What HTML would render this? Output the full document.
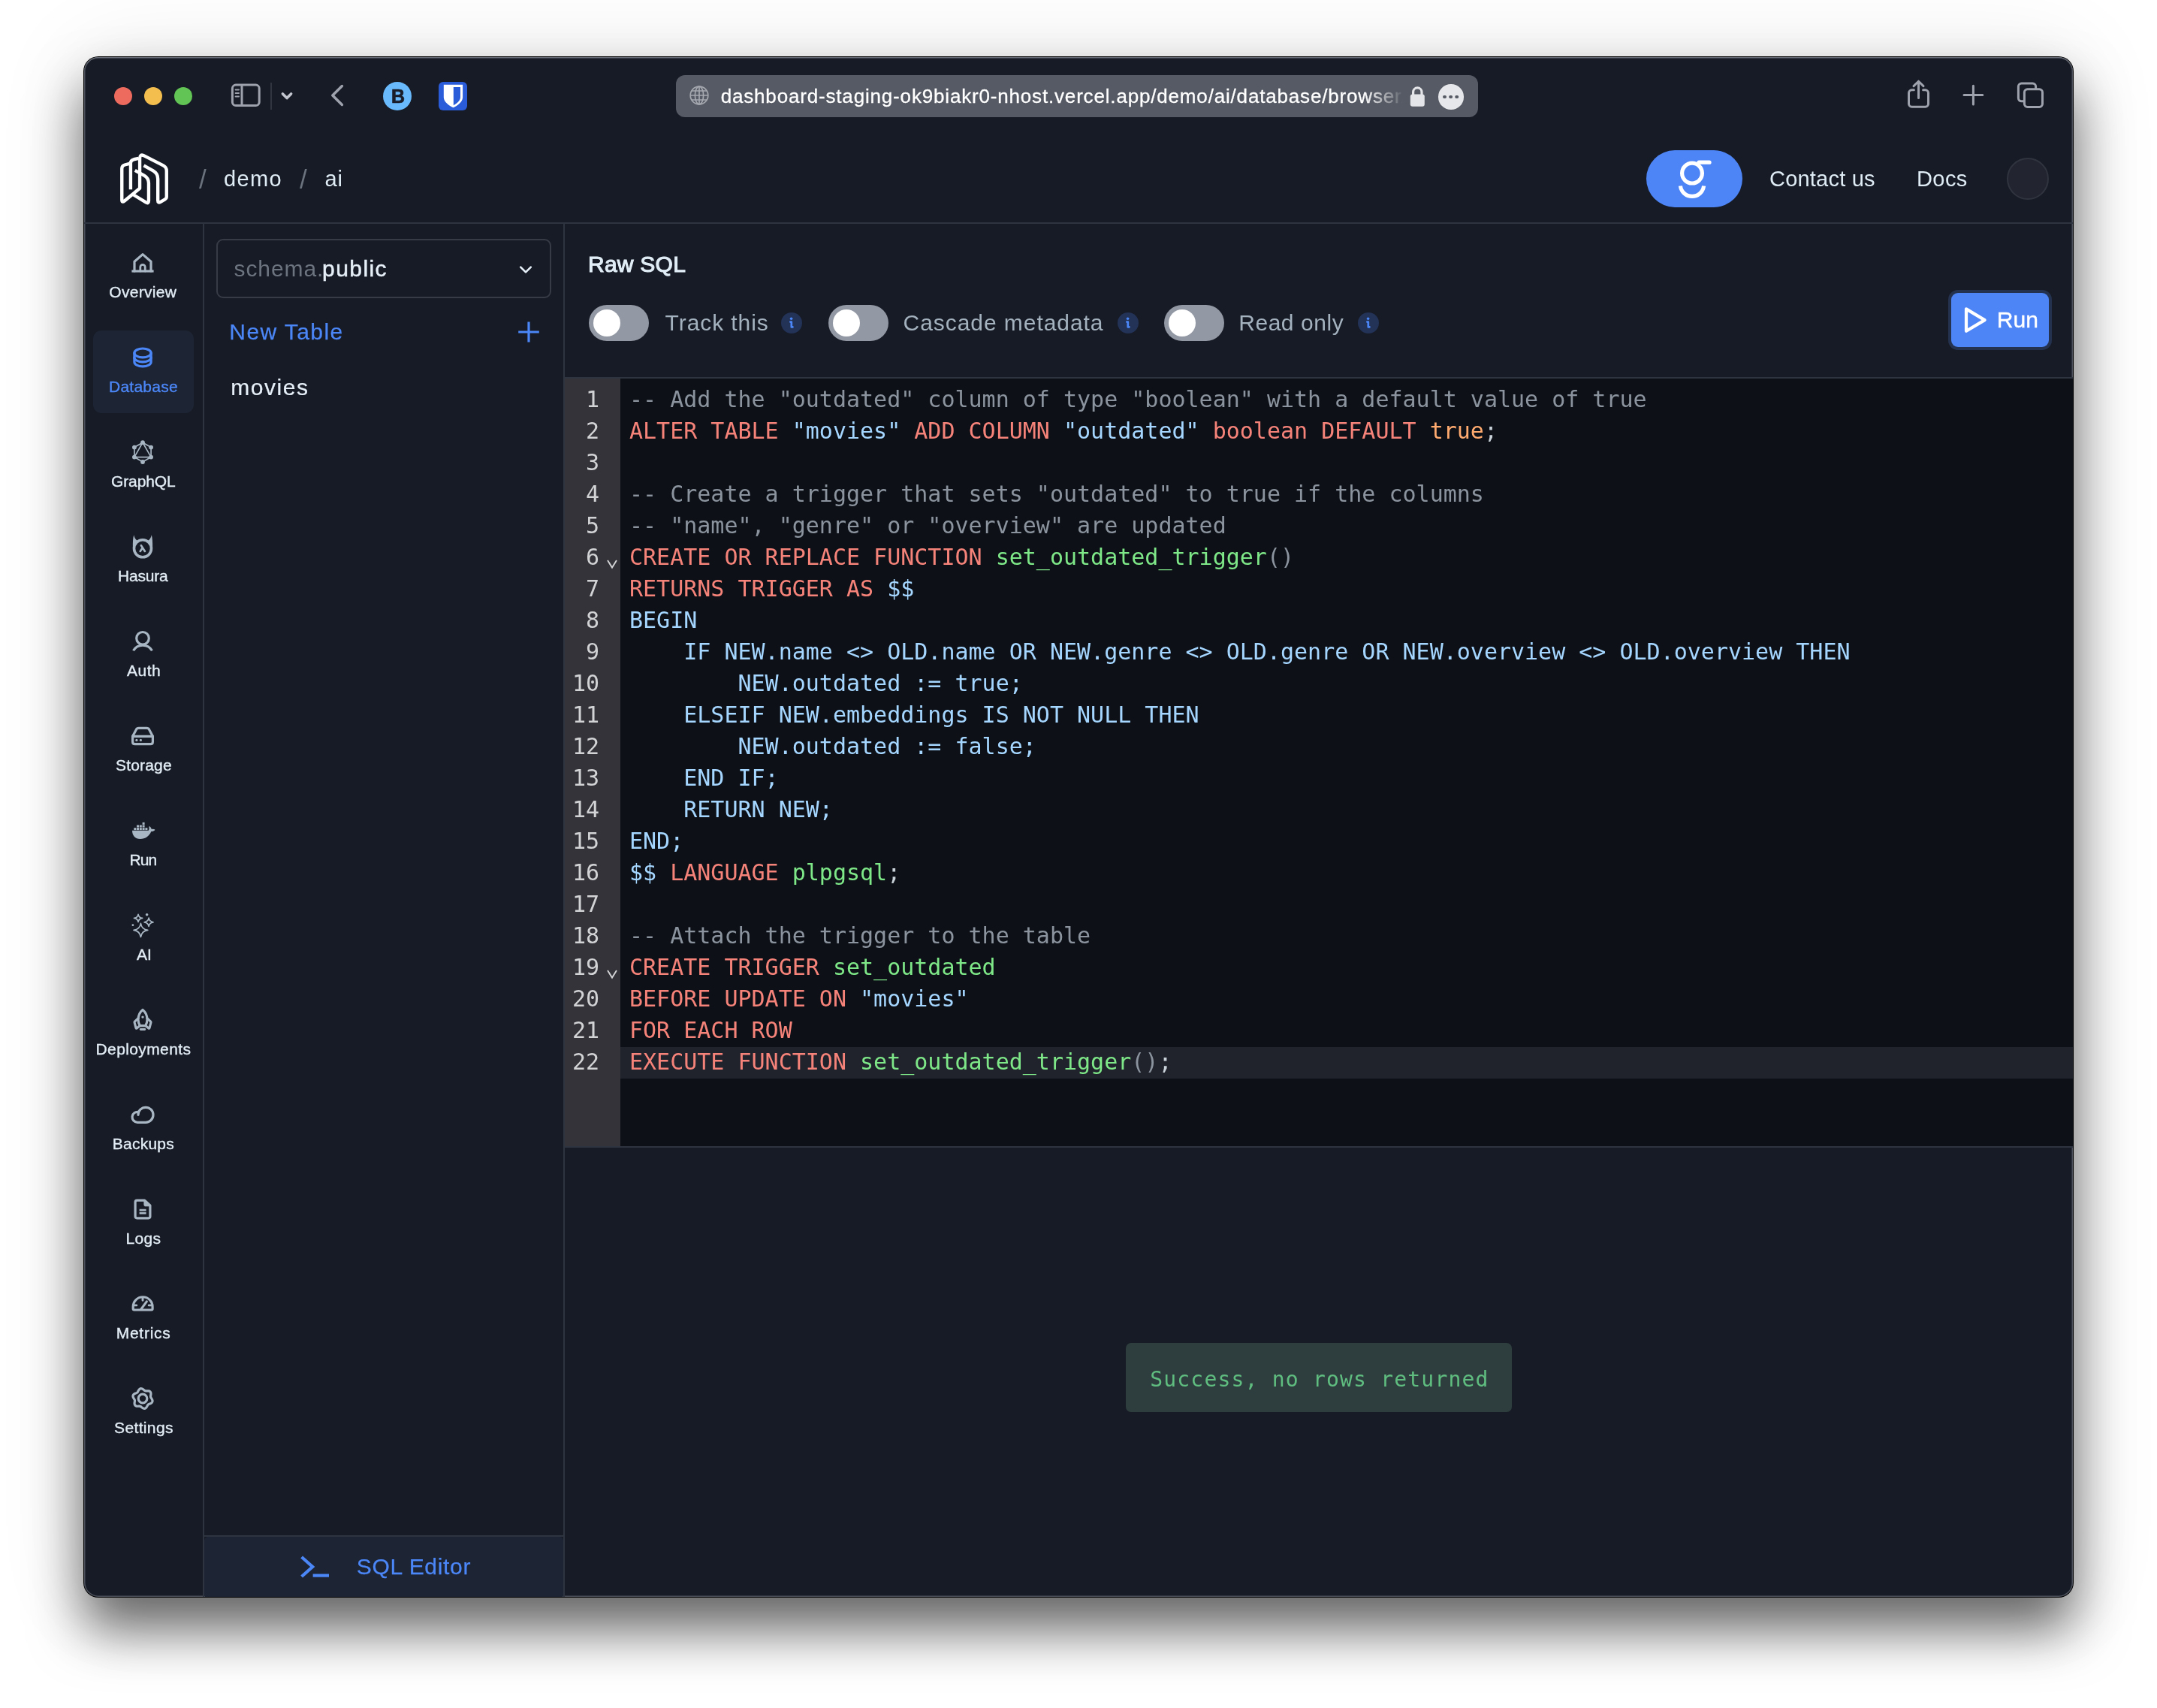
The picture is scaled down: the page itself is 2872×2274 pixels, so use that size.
<!DOCTYPE html>
<html lang="en"><head><meta charset="utf-8"><title>Nhost Dashboard - SQL Editor</title>
<style>

*{box-sizing:border-box;margin:0;padding:0}
html,body{width:2872px;height:2274px;overflow:hidden;background:#fff}
body{position:relative;font-family:"Liberation Sans",sans-serif;-webkit-font-smoothing:antialiased}
.win-outer{position:absolute;left:111px;top:75px;width:2650px;height:2052px;border-radius:20px;background:#000;
 box-shadow:0 43px 70px rgba(0,0,0,.58),0 0 120px rgba(0,0,0,.10)}
.win{position:absolute;left:112px;top:76px;width:2648px;height:2050px;border-radius:19px;background:#171b25;overflow:hidden;
 box-shadow:inset 0 1.3px 0 0 #696d77,inset 0 0 0 1.5px #4b505a}
.page{position:absolute;left:-112px;top:-76px;width:2872px;height:2274px;will-change:transform}
.abs{position:absolute}
.dc{display:contents}
.t{position:absolute;line-height:0;white-space:nowrap}
svg{position:absolute;overflow:visible}
.hl{position:absolute;background:#2e3440}

.editor{background:#0d1017;overflow:hidden;font-family:"DejaVu Sans Mono","Liberation Mono",monospace;font-size:30px;line-height:40px}
.gutter{position:absolute;left:0;top:0;width:74px;height:100%;background:#343339;padding-top:8px;color:#d2d3d5}
.gn{position:relative;height:42px;width:46px;text-align:right;white-space:nowrap}
.fold{position:absolute;left:56px;top:22.6px}
.code{position:absolute;left:74px;top:0;right:0;height:100%;padding-top:8px}
.ln{height:42px;padding-left:12px;white-space:pre}
.ln.act{background:#20222c}

</style></head>
<body>
<div class="win-outer"></div>
<div class="win"><div class="page">
<div class="dc" role="toolbar" aria-label="Safari toolbar">
<!-- ===== Safari title bar ===== -->
<div class="abs" style="left:152px;top:116px;width:24px;height:24px;border-radius:50%;background:#ec6a5e"></div>
<div class="abs" style="left:192px;top:116px;width:24px;height:24px;border-radius:50%;background:#f4be4f"></div>
<div class="abs" style="left:232px;top:116px;width:24px;height:24px;border-radius:50%;background:#61c454"></div>
<svg style="left:300px;top:100px" width="180" height="56" viewBox="300 100 180 56" fill="none" stroke="#9ea2ac" stroke-linecap="round" stroke-linejoin="round">
  <rect x="309.4" y="113.1" width="35.8" height="27.5" rx="4.6" stroke-width="3"/>
  <path d="M322 113.5V140.2" stroke-width="3"/>
  <path d="M313.6 119.6H318M313.6 124H318M313.6 128.5H318" stroke-width="2"/>
  <path d="M361 110V146" stroke="#31353f" stroke-width="2" stroke-linecap="butt"/>
  <path d="M376.4 124.9L382 130.6L387.6 124.9" stroke="#c3c6ce" stroke-width="3.6"/>
  <path d="M455.4 114.6L442.8 127L455.4 139.4" stroke-width="3.5"/>
</svg>
<!-- extension icons -->
<div class="abs" style="left:509.8px;top:108.7px;width:38.6px;height:38.6px;border-radius:50%;background:#69bafd"></div>
<span class="t " style="left:521.00px;top:128.10px;font-size:25px;color:#191e2a;font-weight:700;-webkit-text-stroke:0.7px #191e2a;">B</span>
<div class="abs" style="left:584px;top:109px;width:38px;height:38px;border-radius:6px;background:#2a5bd8"></div>
<svg style="left:584px;top:109px" width="38" height="38" viewBox="0 0 38 38">
  <path d="M6.8 3.7H32.1V20.5C32.1 27 25 31.5 19.5 34.3C14 31.5 6.8 27 6.8 20.5Z" fill="#fff"/>
  <path d="M19.8 7H29V20.5C29 25 24 28.8 19.8 31.2Z" fill="#2a5bd8"/>
</svg>
<!-- url bar -->
<div class="abs" style="left:900px;top:100px;width:1068px;height:56px;border-radius:12px;background:#565a64"></div>
<svg style="left:918px;top:114px" width="26" height="26" viewBox="0 0 26 26" fill="none" stroke="#a5a8af" stroke-width="1.7">
  <circle cx="13" cy="13" r="11.8"/>
  <ellipse cx="13" cy="13" rx="5.6" ry="11.8"/>
  <path d="M13 1.2V24.8M1.2 13H24.8M2.9 7H23.1M2.9 19H23.1"/>
</svg>
<div class="abs" style="left:950px;top:100px;width:918px;height:56px;overflow:hidden;-webkit-mask-image:linear-gradient(90deg,#000 0,#000 866px,rgba(0,0,0,.25) 908px,transparent 918px);mask-image:linear-gradient(90deg,#000 0,#000 866px,rgba(0,0,0,.25) 908px,transparent 918px)">
<span class="t " style="left:9.70px;top:28.00px;font-size:26px;color:#ffffff;letter-spacing:0.826px;-webkit-text-stroke:0.3px;">dashboard-staging-ok9biakr0-nhost.vercel.app/demo/ai/database/browser/</span>
</div>
<svg style="left:1876px;top:114px" width="24" height="30" viewBox="1876 114 24 30">
  <path d="M1881.6 127V122.6A5.7 5.7 0 0 1 1893 122.6V127" fill="none" stroke="#e4e5e8" stroke-width="3.2"/>
  <rect x="1877.8" y="125.6" width="19" height="16.2" rx="3" fill="#e4e5e8"/>
</svg>
<div class="abs" style="left:1915px;top:112px;width:33.5px;height:33.5px;border-radius:50%;background:#e6e7ea"></div>
<div class="abs" style="left:1921.4px;top:126.8px;width:4.4px;height:4.4px;border-radius:50%;background:#565a64;box-shadow:8.1px 0 0 #565a64,16.2px 0 0 #565a64"></div>
<!-- right toolbar -->
<svg style="left:2530px;top:100px" width="200" height="56" viewBox="2530 100 200 56" fill="none" stroke="#9ea2ac" stroke-width="3" stroke-linecap="round" stroke-linejoin="round">
  <path d="M2548.4 119.8H2545.5A4 4 0 0 0 2541.5 123.8V138.2A4 4 0 0 0 2545.5 142.2H2563.5A4 4 0 0 0 2567.5 138.2V123.8A4 4 0 0 0 2563.5 119.8H2560.6"/>
  <path d="M2554.5 130.5V108.6M2548 114.6L2554.5 108.2L2561 114.6"/>
  <path d="M2615 126.6H2639.8M2627.4 114.2V139"/>
  <path d="M2694.5 134.8H2691.6A4.2 4.2 0 0 1 2687.4 130.6V115.3A4.2 4.2 0 0 1 2691.6 111.1H2706.4A4.2 4.2 0 0 1 2710.6 115.3V118.2"/>
  <rect x="2695.4" y="118.8" width="24.1" height="23.7" rx="4.2"/>
</svg>
</div>
<header class="dc">
<!-- ===== App header ===== -->
<svg style="left:140px;top:190px" width="200" height="100" viewBox="0 0 2157 1078.5" fill="none" stroke="#fff" stroke-width="47" stroke-linejoin="round" stroke-linecap="butt">
  <path d="M350 300L282 318Q240 330 240 372V820Q240 866 278 836L497 655V225Q497 160 555 185L835 328Q882 352 882 405V775Q882 800 860 812L795 850Q757 872 757 830V520Q757 440 690 402L555 327"/>
  <path d="M428 397L560 470Q625 508 625 580V835Q625 882 585 857L405 747"/>
  <path d="M366 672V292Q366 250 410 240L480 226"/>
</svg>
<span class="t " style="left:264.90px;top:239.20px;font-size:35px;color:#6b737e;">/</span>
<span class="t " style="left:298.00px;top:238.00px;font-size:29px;color:#dfecf5;letter-spacing:1.361px;">demo</span>
<span class="t " style="left:399.00px;top:239.20px;font-size:35px;color:#6b737e;">/</span>
<span class="t " style="left:432.60px;top:238.00px;font-size:29px;color:#dfecf5;letter-spacing:0.865px;">ai</span>
<div class="abs" style="left:2192px;top:200px;width:128px;height:76px;border-radius:38px;background:#4d85f6"></div>
<svg style="left:2230px;top:208.9px" width="56" height="60" viewBox="2230 208 56 60" fill="none" stroke="#fff" stroke-width="5.2" stroke-linecap="round">
  <circle cx="2253" cy="229.6" r="13.4"/>
  <path d="M2262 215.2H2276"/>
  <path d="M2237.4 246.5A15.7 15.7 0 0 0 2268.6 246.5" stroke-linecap="butt"/>
</svg>
<span class="t " style="left:2356.00px;top:238.00px;font-size:29px;color:#dfecf5;letter-spacing:0.207px;">Contact us</span>
<span class="t " style="left:2552.00px;top:238.00px;font-size:29px;color:#dfecf5;letter-spacing:0.407px;">Docs</span>
<div class="abs" style="left:2672px;top:210px;width:56px;height:56px;border-radius:50%;background:#22252f;border:2px solid #30343e"></div>
<div class="hl" style="left:111px;top:296px;width:2650px;height:2px"></div>
</header>
<nav class="dc" aria-label="Project navigation"><!-- ===== Sidebar ===== -->
<div class="hl" style="left:270px;top:298px;width:2px;height:1830px"></div>
<div class="abs" style="left:124px;top:440px;width:134px;height:110px;border-radius:11px;background:#1d2433"></div>
<span class="t " style="left:145.30px;top:388.50px;font-size:21px;color:#e3edf5;letter-spacing:0.291px;-webkit-text-stroke:0.35px;">Overview</span>
<span class="t " style="left:145.05px;top:514.50px;font-size:21px;color:#4c87f8;letter-spacing:0.239px;-webkit-text-stroke:0.35px;">Database</span>
<span class="t " style="left:148.00px;top:640.50px;font-size:21px;color:#e3edf5;letter-spacing:-0.119px;-webkit-text-stroke:0.35px;">GraphQL</span>
<span class="t " style="left:157.05px;top:766.50px;font-size:21px;color:#e3edf5;letter-spacing:-0.225px;-webkit-text-stroke:0.35px;">Hasura</span>
<span class="t " style="left:169.05px;top:892.50px;font-size:21px;color:#e3edf5;letter-spacing:0.459px;-webkit-text-stroke:0.35px;">Auth</span>
<span class="t " style="left:154.10px;top:1018.50px;font-size:21px;color:#e3edf5;letter-spacing:0.153px;-webkit-text-stroke:0.35px;">Storage</span>
<span class="t " style="left:172.45px;top:1144.50px;font-size:21px;color:#e3edf5;letter-spacing:-0.876px;-webkit-text-stroke:0.35px;">Run</span>
<span class="t " style="left:182.05px;top:1270.50px;font-size:21px;color:#e3edf5;letter-spacing:-0.109px;-webkit-text-stroke:0.35px;">AI</span>
<span class="t " style="left:127.50px;top:1396.50px;font-size:21px;color:#e3edf5;letter-spacing:0.394px;-webkit-text-stroke:0.35px;">Deployments</span>
<span class="t " style="left:149.75px;top:1522.50px;font-size:21px;color:#e3edf5;letter-spacing:0.242px;-webkit-text-stroke:0.35px;">Backups</span>
<span class="t " style="left:167.60px;top:1648.50px;font-size:21px;color:#e3edf5;letter-spacing:0.251px;-webkit-text-stroke:0.35px;">Logs</span>
<span class="t " style="left:154.75px;top:1774.50px;font-size:21px;color:#e3edf5;letter-spacing:0.721px;-webkit-text-stroke:0.35px;">Metrics</span>
<span class="t " style="left:152.05px;top:1900.50px;font-size:21px;color:#e3edf5;letter-spacing:0.358px;-webkit-text-stroke:0.35px;">Settings</span>
<svg style="left:111px;top:298px" width="160" height="1830" viewBox="111 298 160 1830"><g fill="none" stroke="#a8b6c3" stroke-width="3.2" stroke-linecap="round" stroke-linejoin="round" stroke-width="3"><path d="M175.4 361H204.6" stroke-linecap="butt"/><path d="M179 361V348.2L190 338.6L201 348.2V361"/><path d="M186.8 361V355.6A3.2 3.2 0 0 1 193.2 355.6V361" stroke-width="2.8"/></g><g fill="none" stroke="#4c87f8" stroke-width="3.2" stroke-linecap="round" stroke-linejoin="round" stroke-width="3.3"><ellipse cx="190" cy="469.9" rx="11.1" ry="5.9"/><path d="M178.9 469.9V481.9C178.9 485.2 183.9 487.8 190 487.8S201.1 485.2 201.1 481.9V469.9"/><path d="M178.9 475.9C178.9 479.2 183.9 481.8 190 481.8S201.1 479.2 201.1 475.9"/></g><path d="M190 589.2L178.9 595.6 M190 589.2L201.1 595.6 M178.9 595.6L178.9 608.6 M201.1 595.6L201.1 608.6 M178.9 608.6L190 615 M201.1 608.6L190 615 M190 589.2L178.9 608.6 M190 589.2L201.1 608.6 M178.9 608.6L201.1 608.6" fill="none" stroke="#a8b6c3" stroke-width="1.7"/><circle cx="190" cy="589.2" r="2.9" fill="#a8b6c3"/><circle cx="178.9" cy="595.6" r="2.9" fill="#a8b6c3"/><circle cx="201.1" cy="595.6" r="2.9" fill="#a8b6c3"/><circle cx="178.9" cy="608.6" r="2.9" fill="#a8b6c3"/><circle cx="201.1" cy="608.6" r="2.9" fill="#a8b6c3"/><circle cx="190" cy="615" r="2.9" fill="#a8b6c3"/><circle cx="190" cy="730.3" r="11.5" fill="none" stroke="#a8b6c3" stroke-width="3.6"/><path d="M178.2 712.3C177.1 716.2 176.7 722.3 176.9 729L183.4 720.2C180.6 718.6 178.9 715.8 178.2 712.3Z" fill="#a8b6c3"/><path d="M201.8 712.3C202.9 716.2 203.3 722.3 203.1 729L196.6 720.2C199.4 718.6 201.1 715.8 201.8 712.3Z" fill="#a8b6c3"/><path d="M187.9 726.2L192.9 733.9M189.7 729.4L186.7 733.9" fill="none" stroke="#a8b6c3" stroke-width="2.7" stroke-linecap="round"/><g fill="none" stroke="#a8b6c3" stroke-width="3.2" stroke-linecap="round" stroke-linejoin="round" stroke-width="3.3"><circle cx="190" cy="849.8" r="8.3"/><path d="M177.5 866.3A14.4 14.4 0 0 1 202.5 866.3" stroke-linecap="butt"/></g><g fill="none" stroke="#a8b6c3" stroke-width="3.2" stroke-linecap="round" stroke-linejoin="round"><path d="M184.6 969.4H195.4Q197.7 969.4 198.7 971.4L203.4 980.3V987.7Q203.4 990.7 200.4 990.7H179.6Q176.6 990.7 176.6 987.7V980.3L181.3 971.4Q182.3 969.4 184.6 969.4Z"/><path d="M176.6 980.3H203.4"/></g><circle cx="181.9" cy="985.4" r="1.6" fill="#a8b6c3"/><circle cx="187.4" cy="985.4" r="1.6" fill="#a8b6c3"/><path d="M176 1105.8H197.6C198.6 1104.6 198.8 1102.4 198.3 1100.9C198.2 1100.4 198.8 1099.9 199.3 1100.3C200.6 1101.3 201.5 1102.6 201.8 1104C203.3 1103.6 205 1103.7 206 1104.3C206.4 1104.5 206.4 1105 206.1 1105.3C205 1106.5 203.2 1107.2 201.3 1107.1C198.8 1113.2 193.7 1117 186.6 1117C180.2 1117 176.1 1112.7 176 1105.8Z" fill="#a8b6c3"/><rect x="178.3" y="1102.1" width="3" height="3" fill="#a8b6c3"/><rect x="182.0" y="1102.1" width="3" height="3" fill="#a8b6c3"/><rect x="185.8" y="1102.1" width="3" height="3" fill="#a8b6c3"/><rect x="189.6" y="1102.1" width="3" height="3" fill="#a8b6c3"/><rect x="193.4" y="1102.1" width="3" height="3" fill="#a8b6c3"/><rect x="182.0" y="1098.5" width="3" height="3" fill="#a8b6c3"/><rect x="185.8" y="1098.5" width="3" height="3" fill="#a8b6c3"/><rect x="189.6" y="1098.5" width="3" height="3" fill="#a8b6c3"/><rect x="189.6" y="1094.9" width="3" height="3" fill="#a8b6c3"/><g fill="none" stroke="#a8b6c3" stroke-width="1.7" stroke-linejoin="round"><path d="M184.05 1217.3000000000002Q184.78 1221.74 189.65 1222.4Q184.78 1223.06 184.05 1227.5Q183.32 1223.06 178.45000000000002 1222.4Q183.32 1221.74 184.05 1217.3000000000002Z"/><path d="M198.1 1222.2Q198.87 1227.07 204.0 1227.8Q198.87 1228.53 198.1 1233.3999999999999Q197.33 1228.53 192.2 1227.8Q197.33 1227.07 198.1 1222.2Z"/><path d="M187.4 1229.3000000000002Q188.62 1237.22 196.8 1238.4Q188.62 1239.58 187.4 1247.5Q186.18 1239.58 178.0 1238.4Q186.18 1237.22 187.4 1229.3000000000002Z"/></g><circle cx="195.6" cy="1217.7" r="1.8" fill="#a8b6c3"/><circle cx="176.9" cy="1231.7" r="1.4" fill="#a8b6c3"/><g fill="none" stroke="#a8b6c3" stroke-width="3.2" stroke-linecap="round" stroke-linejoin="round"><path d="M190 1344.4C186.4 1347.2 184 1351.6 184 1357.6C184 1360.8 184.9 1363.6 186.3 1365.6H193.7C195.1 1363.6 196 1360.8 196 1357.6C196 1351.6 193.6 1347.2 190 1344.4Z"/><path d="M184.1 1355.6L179.4 1360.2Q178.9 1360.7 179.1 1361.4L181 1368.6Q181.3 1369.6 182.1 1369L186.3 1365.6"/><path d="M195.9 1355.6L200.6 1360.2Q201.1 1360.7 200.9 1361.4L199 1368.6Q198.7 1369.6 197.9 1369L193.7 1365.6"/><path d="M187.2 1370.5H192.8" stroke-width="2.8"/></g><circle cx="190" cy="1354.1" r="1.7" fill="#a8b6c3"/><g fill="none" stroke="#a8b6c3" stroke-width="3.2" stroke-linecap="round" stroke-linejoin="round" stroke-width="3.3"><path d="M184 1484.3A10 10 0 1 1 194 1494.3H183A7 7 0 1 1 184.7 1480.5"/></g><g fill="none" stroke="#a8b6c3" stroke-width="3.2" stroke-linecap="round" stroke-linejoin="round"><path d="M192.6 1598.2H182.3Q180.1 1598.2 180.1 1600.4V1619.6Q180.1 1621.8 182.3 1621.8H197.7Q199.9 1621.8 199.9 1619.6V1605Z"/><path d="M192.4 1598.6V1603.4Q192.4 1605.2 194.2 1605.2H199.6L192.4 1598.6Z" fill="#a8b6c3" stroke-width="2"/><path d="M185.6 1611H194.6M185.6 1615.2H194.6" stroke-width="2.7" stroke-linecap="butt"/></g><g fill="none" stroke="#a8b6c3" stroke-width="3.2" stroke-linecap="round" stroke-linejoin="round"><path d="M177.2 1739.7A12.95 12.95 0 0 1 203.1 1739.7V1742.6Q203.1 1744 201.7 1744H178.6Q177.2 1744 177.2 1742.6Z"/><path d="M190 1727.6V1731.2M178.6 1737.9H181.8M198.2 1737.9H201.4" stroke-width="2.9"/><path d="M187.6 1743.4L195.3 1732.9"/></g><g fill="none" stroke="#a8b6c3" stroke-width="3.2" stroke-linecap="round" stroke-linejoin="round"><circle cx="190" cy="1862" r="5.8"/><path d="M201.78 1862.00L202.31 1862.86L202.75 1863.79L203.00 1864.76L203.00 1865.73L202.71 1866.62L202.14 1867.41L201.37 1868.04L200.47 1868.54L199.53 1868.93L198.65 1869.26L197.89 1869.62L197.26 1870.06L196.75 1870.64L196.32 1871.37L195.89 1872.20L195.41 1873.09L194.82 1873.94L194.11 1874.64L193.27 1875.12L192.35 1875.32L191.39 1875.22L190.45 1874.87L189.57 1874.33L188.77 1873.72L188.04 1873.13L187.35 1872.64L186.65 1872.32L185.89 1872.17L185.05 1872.15L184.11 1872.20L183.10 1872.23L182.07 1872.15L181.11 1871.88L180.27 1871.39L179.64 1870.69L179.25 1869.81L179.08 1868.82L179.10 1867.79L179.24 1866.79L179.38 1865.86L179.46 1865.02L179.39 1864.26L179.14 1863.53L178.73 1862.79L178.22 1862.00L177.69 1861.14L177.25 1860.21L177.00 1859.24L177.00 1858.27L177.29 1857.38L177.86 1856.59L178.63 1855.96L179.53 1855.46L180.47 1855.07L181.35 1854.74L182.11 1854.38L182.74 1853.94L183.25 1853.36L183.68 1852.63L184.11 1851.80L184.59 1850.91L185.18 1850.06L185.89 1849.36L186.73 1848.88L187.65 1848.68L188.61 1848.78L189.55 1849.13L190.43 1849.67L191.23 1850.28L191.96 1850.87L192.65 1851.36L193.35 1851.68L194.11 1851.83L194.95 1851.85L195.89 1851.80L196.90 1851.77L197.93 1851.85L198.89 1852.12L199.73 1852.61L200.36 1853.31L200.75 1854.19L200.92 1855.18L200.90 1856.21L200.76 1857.21L200.62 1858.14L200.54 1858.98L200.61 1859.74L200.86 1860.47L201.27 1861.21Z"/></g></svg></nav>
<aside class="dc" aria-label="Database tables">
<!-- ===== Database left panel ===== -->
<div class="hl" style="left:750px;top:298px;width:2px;height:1830px"></div>
<div class="abs" style="left:287.8px;top:317.8px;width:446px;height:79.6px;border:2px solid #363b46;border-radius:9px"></div>
<span class="t " style="left:311.50px;top:358.00px;font-size:30px;color:#6c7480;letter-spacing:0.907px;">schema.</span>
<span class="t " style="left:429.00px;top:358.00px;font-size:30px;color:#e6eff7;letter-spacing:1.442px;-webkit-text-stroke:0.5px;">public</span>
<svg style="left:688px;top:350px" width="24" height="18" viewBox="688 350 24 18" fill="none" stroke="#e6eff7" stroke-width="2.6" stroke-linecap="round" stroke-linejoin="round"><path d="M693.2 355.6L700 362.4L706.8 355.6"/></svg>
<span class="t " style="left:305.30px;top:441.80px;font-size:30px;color:#4c87f8;letter-spacing:1.419px;-webkit-text-stroke:0.25px;">New Table</span>
<svg style="left:686px;top:424px" width="36" height="36" viewBox="686 424 36 36" fill="none" stroke="#4c87f8" stroke-width="3.2" stroke-linecap="butt"><path d="M690.2 442H717.8M704 428.4V455.6"/></svg>
<span class="t " style="left:307.20px;top:515.60px;font-size:30px;color:#e6eff7;letter-spacing:1.554px;-webkit-text-stroke:0.2px;">movies</span>
<div class="hl" style="left:272px;top:2044px;width:478px;height:2px"></div>
<div class="abs" style="left:272px;top:2046px;width:478px;height:82px;border-radius:5px;background:#1d2433"></div>
<svg style="left:396px;top:2066px" width="48" height="40" viewBox="396 2066 48 40" fill="none" stroke="#4c87f8" stroke-width="4.2" stroke-linecap="butt" stroke-linejoin="miter"><path d="M401.6 2073L416.2 2086L401.6 2099"/><path d="M416.6 2097.6H438"/></svg>
<span class="t " style="left:474.80px;top:2086.20px;font-size:30px;color:#4c87f8;letter-spacing:0.663px;-webkit-text-stroke:0.25px;">SQL Editor</span>
</aside>
<main class="dc">
<!-- ===== Main: Raw SQL ===== -->
<span class="t " style="left:783.00px;top:352.30px;font-size:30px;color:#e1edf6;letter-spacing:0.249px;-webkit-text-stroke:1.1px;">Raw SQL</span>
<div class="abs" style="left:784px;top:406px;width:80px;height:48px;border-radius:24px;background:#9399a4"></div><div class="abs" style="left:789.5px;top:411.8px;width:36.5px;height:36.5px;border-radius:50%;background:#fff"></div>
<span class="t " style="left:885.60px;top:430.00px;font-size:30px;color:#a3b2be;letter-spacing:0.922px;">Track this</span>
<div class="abs" style="left:1040px;top:416px;width:28px;height:28px;border-radius:50%;background:#233257"></div><svg style="left:1040px;top:416px" width="28" height="28" viewBox="0 0 28 28" fill="none" stroke="#4c87f8" stroke-width="2.7" stroke-linecap="round" stroke-linejoin="round"><circle cx="13.6" cy="8.2" r="1.8" fill="#4c87f8" stroke="none"/><path d="M12.4 12.6H13.8V19.4H15.4"/></svg>
<div class="abs" style="left:1103px;top:406px;width:80px;height:48px;border-radius:24px;background:#9399a4"></div><div class="abs" style="left:1108.5px;top:411.8px;width:36.5px;height:36.5px;border-radius:50%;background:#fff"></div>
<span class="t " style="left:1202.60px;top:430.00px;font-size:30px;color:#a3b2be;letter-spacing:0.937px;">Cascade metadata</span>
<div class="abs" style="left:1488px;top:416px;width:28px;height:28px;border-radius:50%;background:#233257"></div><svg style="left:1488px;top:416px" width="28" height="28" viewBox="0 0 28 28" fill="none" stroke="#4c87f8" stroke-width="2.7" stroke-linecap="round" stroke-linejoin="round"><circle cx="13.6" cy="8.2" r="1.8" fill="#4c87f8" stroke="none"/><path d="M12.4 12.6H13.8V19.4H15.4"/></svg>
<div class="abs" style="left:1550px;top:406px;width:80px;height:48px;border-radius:24px;background:#9399a4"></div><div class="abs" style="left:1555.5px;top:411.8px;width:36.5px;height:36.5px;border-radius:50%;background:#fff"></div>
<span class="t " style="left:1649.20px;top:430.00px;font-size:30px;color:#a3b2be;letter-spacing:0.551px;">Read only</span>
<div class="abs" style="left:1808px;top:416px;width:28px;height:28px;border-radius:50%;background:#233257"></div><svg style="left:1808px;top:416px" width="28" height="28" viewBox="0 0 28 28" fill="none" stroke="#4c87f8" stroke-width="2.7" stroke-linecap="round" stroke-linejoin="round"><circle cx="13.6" cy="8.2" r="1.8" fill="#4c87f8" stroke="none"/><path d="M12.4 12.6H13.8V19.4H15.4"/></svg>
<div class="abs" style="left:2598px;top:390px;width:130px;height:72px;border-radius:9px;background:#4d85f6;box-shadow:0 0 0 4px #243250"></div>
<svg style="left:2610px;top:402px" width="44" height="48" viewBox="2610 402 44 48" fill="none" stroke="#fff" stroke-width="4.2" stroke-linejoin="round"><path d="M2618 411.4V440.8L2642.6 426.1Z"/></svg>
<span class="t " style="left:2658.70px;top:426.20px;font-size:30px;color:#ffffff;letter-spacing:0.119px;-webkit-text-stroke:0.4px;">Run</span>
<div class="hl" style="left:752px;top:502px;width:2010px;height:2px"></div>
<!-- code editor -->
<div class="abs editor" style="left:752px;top:504px;width:2010px;height:1022px">
  <div class="gutter"><div class="gn">1</div>
<div class="gn">2</div>
<div class="gn">3</div>
<div class="gn">4</div>
<div class="gn">5</div>
<div class="gn">6<svg class="fold" width="14" height="12" viewBox="0 0 14 12" fill="none" stroke="#d2d3d5" stroke-width="1.9"><path d="M1 1L7 10.6L13 1"/></svg></div>
<div class="gn">7</div>
<div class="gn">8</div>
<div class="gn">9</div>
<div class="gn">10</div>
<div class="gn">11</div>
<div class="gn">12</div>
<div class="gn">13</div>
<div class="gn">14</div>
<div class="gn">15</div>
<div class="gn">16</div>
<div class="gn">17</div>
<div class="gn">18</div>
<div class="gn">19<svg class="fold" width="14" height="12" viewBox="0 0 14 12" fill="none" stroke="#d2d3d5" stroke-width="1.9"><path d="M1 1L7 10.6L13 1"/></svg></div>
<div class="gn">20</div>
<div class="gn">21</div>
<div class="gn">22</div>
</div>
  <div class="code"><div class="ln"><span style="color:#8b949e">-- Add the &quot;outdated&quot; column of type &quot;boolean&quot; with a default value of true</span></div>
<div class="ln"><span style="color:#f6837a">ALTER TABLE</span><span style="color:#c9d1d9"> </span><span style="color:#a5d6ff">&quot;movies&quot;</span><span style="color:#c9d1d9"> </span><span style="color:#f6837a">ADD COLUMN</span><span style="color:#c9d1d9"> </span><span style="color:#a5d6ff">&quot;outdated&quot;</span><span style="color:#c9d1d9"> </span><span style="color:#f6837a">boolean</span><span style="color:#c9d1d9"> </span><span style="color:#f6837a">DEFAULT</span><span style="color:#c9d1d9"> </span><span style="color:#ffab70">true</span><span style="color:#c9d1d9">;</span></div>
<div class="ln">&nbsp;</div>
<div class="ln"><span style="color:#8b949e">-- Create a trigger that sets &quot;outdated&quot; to true if the columns</span></div>
<div class="ln"><span style="color:#8b949e">-- &quot;name&quot;, &quot;genre&quot; or &quot;overview&quot; are updated</span></div>
<div class="ln"><span style="color:#f6837a">CREATE OR REPLACE FUNCTION</span><span style="color:#c9d1d9"> </span><span style="color:#7ee787">set_outdated_trigger</span><span style="color:#8b949e">()</span></div>
<div class="ln"><span style="color:#f6837a">RETURNS TRIGGER AS</span><span style="color:#c9d1d9"> </span><span style="color:#a5d6ff">$$</span></div>
<div class="ln"><span style="color:#a5d6ff">BEGIN</span></div>
<div class="ln"><span style="color:#a5d6ff">    IF NEW.name &lt;&gt; OLD.name OR NEW.genre &lt;&gt; OLD.genre OR NEW.overview &lt;&gt; OLD.overview THEN</span></div>
<div class="ln"><span style="color:#a5d6ff">        NEW.outdated := true;</span></div>
<div class="ln"><span style="color:#a5d6ff">    ELSEIF NEW.embeddings IS NOT NULL THEN</span></div>
<div class="ln"><span style="color:#a5d6ff">        NEW.outdated := false;</span></div>
<div class="ln"><span style="color:#a5d6ff">    END IF;</span></div>
<div class="ln"><span style="color:#a5d6ff">    RETURN NEW;</span></div>
<div class="ln"><span style="color:#a5d6ff">END;</span></div>
<div class="ln"><span style="color:#a5d6ff">$$</span><span style="color:#c9d1d9"> </span><span style="color:#f6837a">LANGUAGE</span><span style="color:#c9d1d9"> </span><span style="color:#7ee787">plpgsql</span><span style="color:#c9d1d9">;</span></div>
<div class="ln">&nbsp;</div>
<div class="ln"><span style="color:#8b949e">-- Attach the trigger to the table</span></div>
<div class="ln"><span style="color:#f6837a">CREATE TRIGGER</span><span style="color:#c9d1d9"> </span><span style="color:#7ee787">set_outdated</span></div>
<div class="ln"><span style="color:#f6837a">BEFORE UPDATE ON</span><span style="color:#c9d1d9"> </span><span style="color:#a5d6ff">&quot;movies&quot;</span></div>
<div class="ln"><span style="color:#f6837a">FOR EACH ROW</span></div>
<div class="ln act"><span style="color:#f6837a">EXECUTE FUNCTION</span><span style="color:#c9d1d9"> </span><span style="color:#7ee787">set_outdated_trigger</span><span style="color:#8b949e">()</span><span style="color:#c9d1d9">;</span></div>
</div>
</div>
<div class="hl" style="left:752px;top:1526px;width:2010px;height:2px"></div>
<!-- result -->
<div class="abs" style="left:1498.6px;top:1788px;width:514.6px;height:92px;border-radius:7px;background:#2e3e3f"></div>
<span class="t " style="left:1531.20px;top:1836.60px;font-size:28px;color:#60bd80;font-family:'DejaVu Sans Mono', 'Liberation Mono', monospace;letter-spacing:1.201px;">Success, no rows returned</span>
</main>
</div></div>
</body></html>
